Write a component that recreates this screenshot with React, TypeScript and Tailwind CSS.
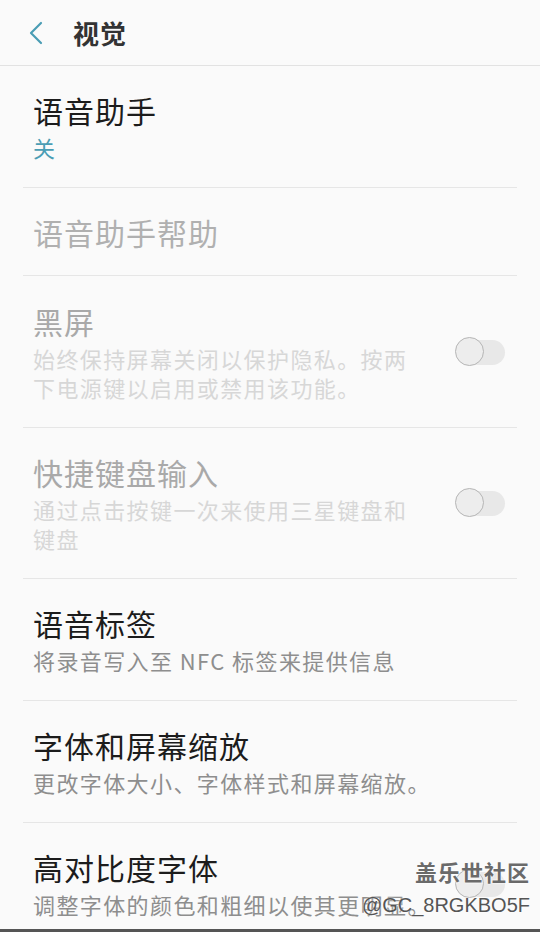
type Row = {
  title: string
  sub?: string
  tone: 'on' | 'dim' | 'off'
  subTone?: 'value' | 'normal'
  toggle?: boolean
  narrow?: boolean
  h: string
}

const rows: Row[] = [
  { title: '语音助手', sub: '关', tone: 'on', subTone: 'value', h: 'h-[122px]' },
  { title: '语音助手帮助', tone: 'dim', h: 'h-[88px]' },
  {
    title: '黑屏',
    sub: '始终保持屏幕关闭以保护隐私。按两下电源键以启用或禁用该功能。',
    tone: 'off',
    toggle: true,
    narrow: true,
    h: 'h-[152px]',
  },
  {
    title: '快捷键盘输入',
    sub: '通过点击按键一次来使用三星键盘和键盘',
    tone: 'off',
    toggle: true,
    narrow: true,
    h: 'h-[151px]',
  },
  { title: '语音标签', sub: '将录音写入至 NFC 标签来提供信息', tone: 'on', h: 'h-[122px]' },
  { title: '字体和屏幕缩放', sub: '更改字体大小、字体样式和屏幕缩放。', tone: 'on', h: 'h-[122px]' },
  { title: '高对比度字体', sub: '调整字体的颜色和粗细以使其更明显。', tone: 'on', toggle: true, h: 'h-[122px]' },
]

function Toggle() {
  return (
    <div className="relative h-[30px] w-[50px] shrink-0">
      <div className="absolute right-0 top-[3px] h-[25px] w-[44px] rounded-full bg-[#e8e8e8]" />
      <div className="absolute left-0 top-0 h-[29px] w-[29px] rounded-full border border-[#b5b5b5] bg-[#ededed]" />
    </div>
  )
}

function SettingRow({ row }: { row: Row }) {
  const titleColor =
    row.tone === 'on' ? 'text-[#1c1c1c]' : row.tone === 'dim' ? 'text-[#b0b0b0]' : 'text-[#a9a9a9]'
  const subColor =
    row.subTone === 'value'
      ? 'text-[#4a9db4]'
      : row.tone === 'off'
        ? 'text-[#d7d7d7]'
        : 'text-[#8e8e8e]'

  return (
    <div className={`flex items-center border-b border-[#e6e6e6] pl-[10px] pr-[12px] ${row.h}`}>
      <div className={`flex flex-col ${row.narrow ? 'w-[385px]' : 'min-w-0 flex-1'}`}>
        <div className={`text-[30px] leading-[38px] tracking-[1px] ${titleColor}`}>{row.title}</div>
        {row.sub && (
          <div className={`mt-1 text-[22px] leading-[29px] tracking-[1.4px] ${subColor}`}>{row.sub}</div>
        )}
      </div>
      {row.toggle && (
        <div className="ml-auto">
          <Toggle />
        </div>
      )}
    </div>
  )
}

export default function App() {
  return (
    <div
      className="relative h-[932px] w-[540px] overflow-hidden bg-[#fafafa]"
      style={{ fontFamily: '"Noto Sans CJK SC", "Noto Sans", sans-serif' }}
    >
      <header className="flex h-[66px] items-center border-b border-[#e2e2e2] pl-[28px]">
        <svg width="16" height="24" viewBox="0 0 16 24" fill="none" className="mt-[1px]">
          <path d="M13 2 L3 12 L13 22" stroke="#4a9db4" strokeWidth="2.2" strokeLinecap="round" strokeLinejoin="round" />
        </svg>
        <h1 className="ml-[29px] text-[26px] font-bold tracking-[1px] text-[#333]">视觉</h1>
      </header>

      <div className="mx-[23px]">
        {rows.map((r) => (
          <SettingRow key={r.title} row={r} />
        ))}
      </div>

      <div className="absolute bottom-[15px] right-[10px] flex flex-col items-end">
        <div
          className="text-[22px] font-bold leading-[28px] tracking-[1px] text-[#6a6a6a]"
          style={{ textShadow: '0 0 2px #fff, 0 0 2px #fff' }}
        >
          盖乐世社区
        </div>
        <div
          className="mt-[8px] text-[20px] leading-[24px] text-[#555]"
          style={{ fontFamily: '"Liberation Sans", sans-serif', textShadow: '0 0 2px #fff' }}
        >
          @GC_8RGKBO5F
        </div>
      </div>

      <div className="absolute bottom-0 left-0 h-[3px] w-full bg-[#555]" />
    </div>
  )
}
